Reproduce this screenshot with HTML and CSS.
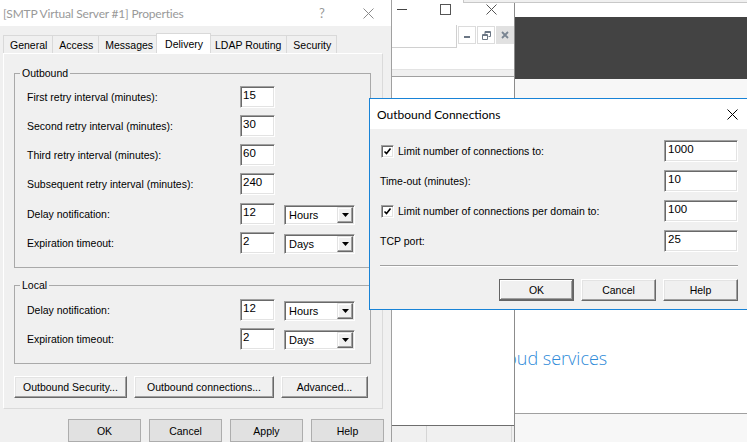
FILE: index.html
```html
<!DOCTYPE html>
<html>
<head>
<meta charset="utf-8">
<title>SMTP Virtual Server Properties</title>
<link rel="stylesheet" href="styles.css">
</head>
<body>
<div class="desk">

  <div class="win-back">
    <div class="back-top"></div>
    <div class="back-band"></div>
    <div class="back-sub"></div>
    <div class="back-panel"><span class="cloud">Cloud services</span></div>
    <div class="back-foot"></div>
  </div>

  <div class="win-mid">
    <div class="mid-cap">
      <svg class="mc-min" width="10" height="10" viewBox="0 0 10 10"><path d="M0 5.5H10" stroke="#444" stroke-width="1"/></svg>
      <svg class="mc-max" width="11" height="11" viewBox="0 0 11 11"><rect x="0.5" y="0.5" width="10" height="10" fill="none" stroke="#555" stroke-width="1"/></svg>
      <svg class="mc-close" width="11" height="11" viewBox="0 0 11 11"><path d="M0.5 0.5L10.5 10.5M10.5 0.5L0.5 10.5" stroke="#555" stroke-width="1"/></svg>
    </div>
    <div class="mid-mdi">
      <div class="mdi-left"></div>
      <div class="mdi-btns">
        <span class="mdi-btn"><svg width="8" height="8" viewBox="0 0 8 8"><rect x="1" y="5" width="6" height="2" fill="#6b7684"/></svg></span>
        <span class="mdi-btn"><svg width="9" height="9" viewBox="0 0 9 9"><path d="M3 0.5H8.5V5.5H6.5M0.5 3.5H5.5V8.5H0.5Z M0.5 4.5H5.5M3 0.5V3.5M3 1.5H8.5" fill="none" stroke="#6b7684" stroke-width="1"/></svg></span>
        <span class="mdi-btn mdi-close"><svg width="8" height="8" viewBox="0 0 8 8"><path d="M1 1L7 7M7 1L1 7" stroke="#7a8592" stroke-width="1.8"/></svg></span>
      </div>
    </div>
    <div class="mid-gap"></div>
    <div class="mid-band"></div>
    <div class="mid-body"></div>
    <div class="mid-status"><span class="st1"></span><span class="st2"></span></div>
  </div>

  <div class="strip-top"></div>

  <div class="dlg-main">
    <div class="main-cap">
      <span class="main-title">[SMTP Virtual Server #1] Properties</span>
      <span class="cap-btn cap-help">?</span>
      <span class="cap-btn"><svg width="11" height="11" viewBox="0 0 11 11"><path d="M0.5 0.5L10.5 10.5M10.5 0.5L0.5 10.5" stroke="#8a8a8a" stroke-width="1"/></svg></span>
    </div>
    <div class="tabs">
      <span class="tab">General</span>
      <span class="tab">Access</span>
      <span class="tab">Messages</span>
      <span class="tab tab-on">Delivery</span>
      <span class="tab">LDAP Routing</span>
      <span class="tab">Security</span>
    </div>
    <div class="page">
      <div class="group">
        <div class="group-title">Outbound</div>
        <div class="rows">
          <div class="row"><span class="lbl">First retry interval (minutes):</span><span class="tb">15</span></div>
          <div class="row"><span class="lbl">Second retry interval (minutes):</span><span class="tb">30</span></div>
          <div class="row"><span class="lbl">Third retry interval (minutes):</span><span class="tb">60</span></div>
          <div class="row"><span class="lbl">Subsequent retry interval (minutes):</span><span class="tb">240</span></div>
          <div class="row"><span class="lbl">Delay notification:</span><span class="tb">12</span>
            <span class="combo"><span class="combo-val">Hours</span><span class="combo-btn"><svg width="7" height="4" viewBox="0 0 7 4"><path d="M0 0H7L3.5 4Z" fill="#000"/></svg></span></span></div>
          <div class="row"><span class="lbl">Expiration timeout:</span><span class="tb">2</span>
            <span class="combo"><span class="combo-val">Days</span><span class="combo-btn"><svg width="7" height="4" viewBox="0 0 7 4"><path d="M0 0H7L3.5 4Z" fill="#000"/></svg></span></span></div>
        </div>
      </div>
      <div class="group group-local">
        <div class="group-title">Local</div>
        <div class="rows">
          <div class="row"><span class="lbl">Delay notification:</span><span class="tb">12</span>
            <span class="combo"><span class="combo-val">Hours</span><span class="combo-btn"><svg width="7" height="4" viewBox="0 0 7 4"><path d="M0 0H7L3.5 4Z" fill="#000"/></svg></span></span></div>
          <div class="row"><span class="lbl">Expiration timeout:</span><span class="tb">2</span>
            <span class="combo"><span class="combo-val">Days</span><span class="combo-btn"><svg width="7" height="4" viewBox="0 0 7 4"><path d="M0 0H7L3.5 4Z" fill="#000"/></svg></span></span></div>
        </div>
      </div>
      <div class="page-btns">
        <span class="btn3d pb-sec">Outbound Security...</span>
        <span class="btn3d pb-conn">Outbound connections...</span>
        <span class="btn3d pb-adv">Advanced...</span>
      </div>
    </div>
    <div class="dlg-btns">
      <span class="btn">OK</span>
      <span class="btn">Cancel</span>
      <span class="btn">Apply</span>
      <span class="btn">Help</span>
    </div>
  </div>

  <div class="dlg-conn">
    <div class="conn-cap">
      <span class="conn-title">Outbound Connections</span>
      <svg width="11" height="11" viewBox="0 0 11 11"><path d="M0.5 0.5L10.5 10.5M10.5 0.5L0.5 10.5" stroke="#000" stroke-width="1"/></svg>
    </div>
    <div class="conn-body">
      <div class="crows">
        <div class="crow">
          <span class="chk"><span class="cb"><svg width="9" height="9" viewBox="0 0 9 9"><path d="M1.5 4.5L3.5 6.5L7.5 1.5" fill="none" stroke="#000" stroke-width="1.6"/></svg></span>Limit number of connections to:</span>
          <span class="tb tb-wide">1000</span>
        </div>
        <div class="crow">
          <span class="lbl">Time-out (minutes):</span>
          <span class="tb tb-wide">10</span>
        </div>
        <div class="crow">
          <span class="chk"><span class="cb"><svg width="9" height="9" viewBox="0 0 9 9"><path d="M1.5 4.5L3.5 6.5L7.5 1.5" fill="none" stroke="#000" stroke-width="1.6"/></svg></span>Limit number of connections per domain to:</span>
          <span class="tb tb-wide">100</span>
        </div>
        <div class="crow">
          <span class="lbl">TCP port:</span>
          <span class="tb tb-wide">25</span>
        </div>
      </div>
      <div class="sep"></div>
      <div class="conn-btns">
        <span class="btn3d btn-def">OK</span>
        <span class="btn3d">Cancel</span>
        <span class="btn3d">Help</span>
      </div>
    </div>
  </div>

</div>
</body>
</html>
```
FILE: styles.css
```css
* { box-sizing: border-box; }
html, body { margin: 0; padding: 0; }
body {
  width: 747px;
  height: 442px;
  overflow: hidden;
  background: #f0f0f0;
  font-family: "Liberation Sans", Arial, sans-serif;
  font-size: 10.5px;
  color: #000;
}
.desk { position: relative; width: 747px; height: 442px; overflow: hidden; }

/* ---------- back window ---------- */
.win-back {
  position: absolute; left: 391px; top: 0; width: 400px; height: 442px;
  background: #fff; display: flex; flex-direction: column;
}
.back-top { height: 17px; background: #fff; flex: none; }
.back-band { height: 62px; background: #434343; flex: none; }
.back-sub { height: 51px; background: #f7f7f7; flex: none; }
.back-panel {
  height: 284px; flex: none; background: #fff; border-bottom: 1px solid #a0a0a0;
  padding: 216px 0 0 100px; white-space: nowrap;
}
.cloud {
  font-family: "Open Sans", "Noto Sans", sans-serif; font-weight: 300;
  font-size: 18px; line-height: 24px; color: #2f8bd9;
}
.back-foot { flex: 1; background: #f7f7f7; }

/* ---------- middle window ---------- */
.win-mid {
  position: absolute; left: 391px; top: 0; width: 124px; height: 460px;
  background: #fff; border-left: 1px solid #a0a0a0; border-right: 1px solid #8c8c8c;
  display: flex; flex-direction: column;
}
.mid-cap { height: 25px; flex: none; display: flex; align-items: flex-start; padding: 4px 0 0 5px; }
.mc-max { margin-left: 33px; }
.mc-close { margin-left: 35px; }
.cap-btn { flex: none; width: 46px; display: flex; align-items: center; justify-content: center; }
.mid-mdi { height: 23px; flex: none; display: flex; }
.mdi-left { flex: 1; border-right: 1px solid #d0d0d0; border-bottom: 1px solid #d0d0d0; }
.mdi-btns { display: flex; gap: 1px; padding: 1px 0 0 1px; }
.mdi-btn {
  width: 18px; height: 18px; border: 1px solid #dcdcdc; background: #fff;
  display: flex; align-items: center; justify-content: center;
}
.mdi-close { background: #e1e1e1; border-color: #e1e1e1; }
.mid-gap { height: 21px; flex: none; }
.mid-band { height: 8px; flex: none; background: #f0f0f0; border-top: 1px solid #e3e3e3; border-bottom: 1px solid #a0a0a0; }
.mid-body { height: 349px; flex: none; border-bottom: 1px solid #6d6d6d; }
.mid-status { flex: 1; background: #f0f0f0; display: flex; }
.st1 { width: 35px; border-right: 1px solid #d5d5d5; }
.st2 { width: 85px; border-right: 1px solid #d5d5d5; }

.strip-top {
  position: absolute; left: 463px; top: 0; right: 0; height: 3px;
  background: #f0f0f0; border-left: 1px solid #c8c8c8; border-bottom: 1px solid #c8c8c8;
}

/* ---------- main dialog ---------- */
.dlg-main {
  position: absolute; left: 0; top: 0; width: 391px; height: 460px;
  background: #f0f0f0; display: flex; flex-direction: column;
}
.main-cap { height: 26px; flex: none; background: #fff; display: flex; align-items: center; }
.main-title {
  flex: 1; padding-left: 3px; white-space: nowrap; letter-spacing: -0.2px;
  font-family: Lato, "Noto Sans", sans-serif; font-size: 12px; color: #999;
}
.main-cap .cap-btn { height: 26px; }
.cap-help { font-family: Lato, "Noto Sans", sans-serif; font-size: 13px; color: #999; }

.tabs { height: 27px; flex: none; display: flex; align-items: flex-end; padding-left: 3px; }
.tab {
  height: 18px; padding: 0 5px 0 6px; border: 1px solid #d9d9d9; border-bottom: none;
  margin-left: -1px; display: flex; align-items: center; background: #f0f0f0; white-space: nowrap;
}
.tab:first-child { margin-left: 0; }
.tab-on {
  height: 20px; background: #fff; margin-left: -3px; margin-right: -2px;
  padding: 0 7px 0 8px; position: relative; z-index: 1;
}

.page {
  margin-left: 3px; width: 380px; height: 356px; flex: none;
  border: 1px solid; border-color: #fff #dadada #dadada #fff;
  padding: 19px 11px 0 10px;
}
.group { border: 1px solid #a9a9a9; padding: 0 0 14px 12px; }
.group-local { margin-top: 17px; }
.group-title {
  width: max-content; margin: -7px 0 6px -7px; padding: 0 2px;
  background: #f0f0f0; line-height: 13px;
}
.rows { display: flex; flex-direction: column; gap: 7px; }
.row {
  display: grid; grid-template-columns: 204px 35px 71px; column-gap: 9px;
  height: 22px; align-items: center;
}
.lbl { white-space: nowrap; }

.tb {
  height: 22px; background: #fff; border: 1px solid;
  border-color: #a0a0a0 #fff #fff #a0a0a0;
  box-shadow: inset 1px 1px #696969, inset -1px -1px #e3e3e3;
  padding: 1px 0 0 2px;
  font-family: "Liberation Sans", Arial, sans-serif;
  font-size: 11.5px; line-height: 15px;
}
.combo {
  align-self: start; margin-top: 3px; height: 20px; background: #fff; border: 1px solid;
  border-color: #a0a0a0 #fff #fff #a0a0a0;
  box-shadow: inset 1px 1px #696969, inset -1px -1px #e3e3e3;
  display: flex; align-items: center; padding: 1px 1px 1px 4px;
}
.combo-val { flex: 1; font-size: 11px; }
.combo-btn {
  width: 16px; height: 16px; background: #f0f0f0; border: 1px solid;
  border-color: #e3e3e3 #696969 #696969 #e3e3e3;
  box-shadow: inset -1px -1px #a0a0a0, inset 1px 1px #fff;
  display: flex; align-items: center; justify-content: center;
}

.btn3d {
  height: 22px; display: flex; align-items: center; justify-content: center;
  background: #f0f0f0; border: 1px solid; border-color: #fff #696969 #696969 #fff;
  box-shadow: inset -1px -1px #a0a0a0, inset 1px 1px #e3e3e3; white-space: nowrap;
}
.page-btns { display: flex; gap: 7px; margin-top: 12px; }
.pb-sec { width: 113px; }
.pb-conn { width: 140px; }
.pb-adv { width: 87px; }

.dlg-btns { display: flex; justify-content: flex-end; gap: 8px; padding-right: 7px; margin-top: 10px; }
.btn {
  width: 73px; height: 23px; background: #e1e1e1; border: 1px solid #adadad;
  display: flex; align-items: center; justify-content: center;
}

/* ---------- outbound connections dialog ---------- */
.dlg-conn {
  position: absolute; left: 369px; top: 98px; width: 380px; height: 212px;
  border: 1px solid #1883d7; background: #f0f0f0; display: flex; flex-direction: column;
}
.conn-cap {
  height: 30px; flex: none; background: #fff; display: flex; align-items: center;
  justify-content: space-between; padding: 0 10px 0 7px;
}
.conn-title { font-family: Lato, "Noto Sans", sans-serif; font-size: 12px; color: #000; }
.conn-body { flex: 1; padding: 11px 10px 0 10px; }
.crows { display: flex; flex-direction: column; gap: 8px; }
.crow { height: 22px; display: flex; align-items: center; justify-content: space-between; }
.tb-wide { width: 74px; padding-left: 3px; }
.chk { display: flex; align-items: center; gap: 4px; white-space: nowrap; }
.cb {
  width: 13px; height: 13px; margin-left: 1px; background: #fff; border: 1px solid;
  border-color: #a0a0a0 #fff #fff #a0a0a0;
  box-shadow: inset 1px 1px #696969, inset -1px -1px #e3e3e3;
  display: flex; align-items: center; justify-content: center;
}
.sep { height: 2px; margin-top: 13px; border-top: 1px solid #a0a0a0; border-bottom: 1px solid #fff; }
.conn-btns { display: flex; justify-content: flex-end; gap: 7px; margin-top: 12px; }
.conn-btns .btn3d { width: 75px; }
.btn-def {
  border-color: #646464;
  box-shadow: inset -1px -1px #696969, inset 1px 1px #fff, inset -2px -2px #a0a0a0;
}
```
